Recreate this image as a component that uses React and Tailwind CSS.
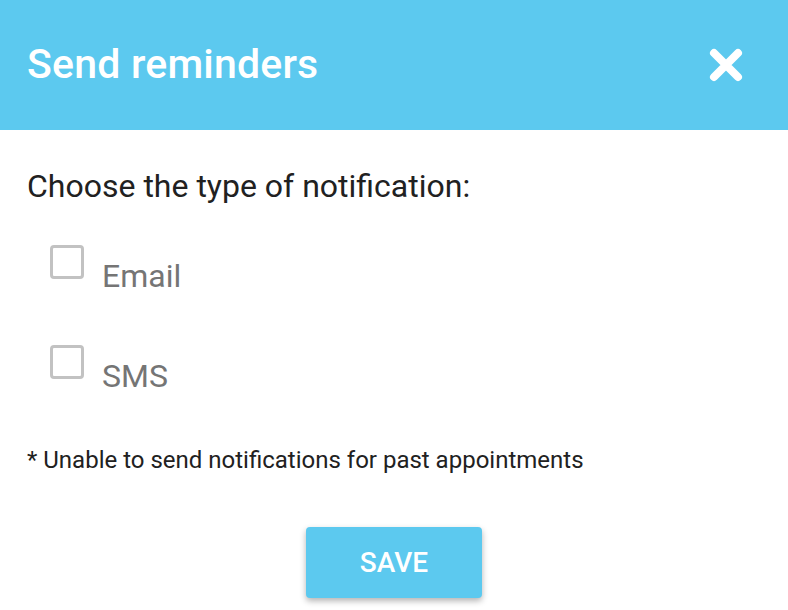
export default function App() {
  return (
    <div className="w-[788px] h-[610px] bg-white overflow-hidden" style={{ fontFamily: 'Roboto, "Noto Sans", sans-serif' }}>
      {/* Header */}
      <header className="h-[130px] bg-[#5cc9ef] flex items-center justify-between pl-[27px] pr-[44px]">
        <h1 className="text-[41px] font-medium text-white leading-none tracking-[0.2px] -mt-[2px]">Send reminders</h1>
        <button type="button" className="w-[36px] h-[36px] flex items-center justify-center">
          <svg width="36" height="36" viewBox="0 0 36 36" fill="none">
            <path d="M6 6L30 30M30 6L6 30" stroke="#fff" strokeWidth="8" strokeLinecap="round" />
          </svg>
        </button>
      </header>

      <main className="pl-[27px] pt-[40px]">
        <p className="text-[32px] text-[#212121] leading-none">Choose the type of notification:</p>

        <div className="mt-[43px] pl-[23px] flex flex-col gap-[53px]">
          {['Email', 'SMS'].map(label => (
            <label key={label} className="flex items-start gap-[18px]">
              <span className="w-[34px] h-[34px] border-[3px] border-[#c2c2c2] rounded-[4px] shrink-0" />
              <span className="text-[32px] text-[#757575] leading-none mt-[15px]">{label}</span>
            </label>
          ))}
        </div>

        <p className="mt-[56px] text-[24px] text-[#212121] leading-none">* Unable to send notifications for past appointments</p>
      </main>

      <div className="flex justify-center mt-[55px]">
        <button
          type="button"
          className="w-[176px] h-[71px] bg-[#5cc9ef] rounded-[4px] text-white text-[28px] font-medium shadow-[0_3px_6px_rgba(0,0,0,0.3)]"
        >
          SAVE
        </button>
      </div>
    </div>
  )
}
